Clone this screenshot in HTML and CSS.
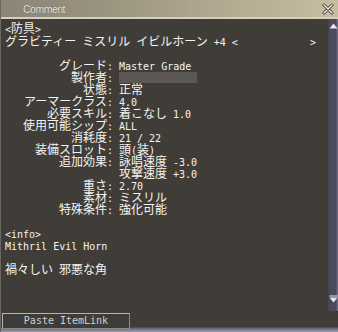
FILE: index.html
```html
<!DOCTYPE html>
<html lang="ja">
<head>
<meta charset="utf-8">
<link rel="stylesheet" href="styles.css">
</head>
<body>
<div class="win">
  <div class="title">
    <span class="ttl">Comment</span>
    <svg class="close" width="12" height="12" viewBox="0 0 12 12">
      <path d="M2 2 L10 10 M10 2 L2 10" stroke="#3a3630" stroke-width="3" stroke-linecap="round"/>
      <path d="M2 2 L10 10 M10 2 L2 10" stroke="#f4f2ea" stroke-width="1.4" stroke-linecap="round"/>
    </svg>
  </div>
  <div class="main">
    <div class="content">
      <div class="hdr"><span class="l">&lt;</span>防具<span class="l">&gt;</span></div>
      <div class="hdr">グラビティー<span class="l"> </span>ミスリル<span class="l"> </span>イビルホーン<span class="l"> +4 &lt;</span><span class="field"></span><span class="l">&gt;</span></div>
      <div class="props">
        <div class="k">グレード<span class="l">:</span></div><div class="v"><span class="l">Master Grade</span></div>
        <div class="k">製作者<span class="l">:</span></div><div class="v"><span class="maker"></span></div>
        <div class="k">状態<span class="l">:</span></div><div class="v">正常</div>
        <div class="k">アーマークラス<span class="l">:</span></div><div class="v"><span class="l">4.0</span></div>
        <div class="k">必要スキル<span class="l">:</span></div><div class="v">着こなし<span class="l"> 1.0</span></div>
        <div class="k">使用可能シップ<span class="l">:</span></div><div class="v"><span class="l">ALL</span></div>
        <div class="k">消耗度<span class="l">:</span></div><div class="v"><span class="l">21 / 22</span></div>
        <div class="k">装備スロット<span class="l">:</span></div><div class="v">頭<span class="l">(</span>装<span class="l">)</span></div>
        <div class="k">追加効果<span class="l">:</span></div><div class="v">詠唱速度<span class="l"> -3.0</span></div>
        <div class="k"></div><div class="v">攻撃速度<span class="l"> +3.0</span></div>
        <div class="k">重さ<span class="l">:</span></div><div class="v"><span class="l">2.70</span></div>
        <div class="k">素材<span class="l">:</span></div><div class="v">ミスリル</div>
        <div class="k">特殊条件<span class="l">:</span></div><div class="v">強化可能</div>
      </div>
      <div class="info">
        <div class="row"><span class="l">&lt;info&gt;</span></div>
        <div class="row"><span class="l">Mithril Evil Horn</span></div>
        <div class="row gap">禍々しい<span class="l"> </span>邪悪な角</div>
      </div>
    </div>
    <div class="scroll">
      <svg class="arrow" width="9" height="6" viewBox="0 0 9 6"><path d="M4.5 0.5 L8.5 5.5 L0.5 5.5 Z" fill="#e8e8f0"/></svg>
      <svg class="arrow" width="9" height="8" viewBox="0 0 9 8"><path d="M0.5 0.5 H8.5 V1.5 H0.5 Z M0.5 2.5 L8.5 2.5 L4.5 7.5 Z" fill="#e8e8f0"/></svg>
    </div>
  </div>
  <div class="foot">
    <button class="paste">Paste ItemLink</button>
  </div>
</div>
</body>
</html>
```

FILE: styles.css
```css
html, body {
  margin: 0;
  padding: 0;
  background: #3a3833;
}

.win {
  width: 338px;
  height: 332px;
  display: flex;
  flex-direction: column;
  background: #403d38;
  box-sizing: border-box;
  border-left: 1px solid #6b6862;
  overflow: hidden;
}

.title {
  height: 17px;
  flex: none;
  display: flex;
  align-items: center;
  justify-content: space-between;
  padding: 0 4px 0 22px;
  background: linear-gradient(90deg, #8a8577 0%, #9a937f 30%, #aea68e 60%, #c6bda2 100%);
  border-bottom: 2px solid #d6cfbb;
}

.ttl {
  font-family: "Liberation Sans", sans-serif;
  font-size: 10.5px;
  color: #e6e4da;
  text-shadow: 0 0 1px #4e4b44;
  letter-spacing: -0.5px;
}

.close {
  display: block;
  margin-top: 1px;
}

.main {
  flex: 1;
  display: flex;
  min-height: 0;
}

.content {
  flex: 1;
  padding: 2px 0 0 4px;
  font-family: "Noto Sans CJK JP", sans-serif;
  font-size: 12px;
  line-height: 12px;
  color: #f4f4f2;
  white-space: nowrap;
}

.l {
  font-family: "DejaVu Sans Mono", "Liberation Mono", monospace;
  font-size: 10px;
  white-space: pre;
}

.hdr {
  height: 13px;
  line-height: 13px;
}

.field {
  display: inline-block;
  width: 72px;
  height: 11px;
}

.props {
  margin-top: 12px;
  display: grid;
  grid-template-columns: 108px auto;
  column-gap: 6px;
  grid-auto-rows: 12px;
}

.k {
  text-align: right;
}

.maker {
  display: inline-block;
  width: 78px;
  height: 11px;
  background: #5b5853;
  vertical-align: -1px;
}

.info {
  margin-top: 12px;
}

.row {
  height: 12px;
}

.row.gap {
  margin-top: 12px;
}

.scroll {
  width: 10px;
  flex: none;
  display: flex;
  flex-direction: column;
  justify-content: space-between;
  align-items: center;
  padding: 4px 0 8px;
  background: linear-gradient(90deg, #45434a 0%, #4c4a5e 30%, #4b4960 80%, #7a7890 100%);
  box-sizing: border-box;
}

.arrow {
  display: block;
}

.foot {
  height: 21px;
  flex: none;
  padding: 2px 0 0 1px;
  box-sizing: border-box;
  background: linear-gradient(180deg, #403d38 0%, #403d38 75%, #6f6f88 85%, #9c9cb0 100%);
}

.paste {
  display: block;
  width: 128px;
  height: 16px;
  margin: 0;
  padding: 0;
  background: #3e3c38;
  border: 1px solid #b4b4b0;
  border-right-color: #8c8a86;
  border-bottom-color: #8c8a86;
  color: #cfcfcf;
  font-family: "DejaVu Sans Mono", "Liberation Mono", monospace;
  font-size: 10px;
  line-height: 14px;
  text-align: center;
}
```
